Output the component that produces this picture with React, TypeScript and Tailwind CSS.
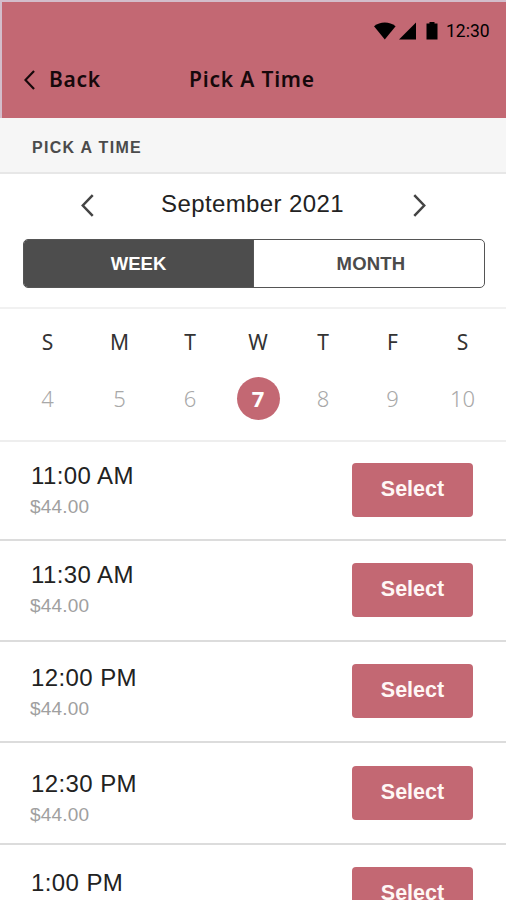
const days = [
  { label: "S", date: 4, width: "w-[71px]" },
  { label: "M", date: 5, width: "w-[73px]" },
  { label: "T", date: 6, width: "w-[68px]" },
  { label: "W", date: 7, width: "w-[68px]", active: true },
  { label: "T", date: 8, width: "w-[62px]" },
  { label: "F", date: 9, width: "w-[77px]" },
  { label: "S", date: 10, width: "w-[63px]" },
];

const slots = [
  { time: "11:00 AM", price: "$44.00", row: "h-[99px]", text: "pt-[18px]", button: "mt-[21px]" },
  { time: "11:30 AM", price: "$44.00", row: "h-[101px]", text: "pt-[18px]", button: "mt-[22px]" },
  { time: "12:00 PM", price: "$44.00", row: "h-[101px]", text: "pt-5", button: "mt-[22px]" },
  { time: "12:30 PM", price: "$44.00", row: "h-[102px]", text: "pt-[25px]", button: "mt-[23px]" },
  { time: "1:00 PM", row: "h-[101px]", text: "pt-[22px]", button: "mt-[22px]" },
];

function Chevron({ right, className }: { right?: boolean; className: string }) {
  return (
    <svg className={className} viewBox="0 0 12 22" fill="none" stroke="currentColor" strokeWidth="2.4">
      <path d={right ? "M1 1L10.5 11L1 21" : "M11 1L1.5 11L11 21"} />
    </svg>
  );
}

function StatusBar() {
  return (
    <div className="flex h-[58px] items-center pl-[372px] text-black">
      <svg className="h-[18px] w-[22px]" viewBox="0 0 22 18" fill="currentColor">
        <path d="M0 4.2C3.2 1.7 6.8.5 10.8.5S18.400 1.700 21.600 4.200L10.800 17.500Z" />
      </svg>
      <svg className="ml-[3px] h-[18px] w-[17px]" viewBox="0 0 17 18" fill="currentColor">
        <path d="M17 .5V17.500H0Z" />
      </svg>
      <svg className="ml-[10px] h-[18px] w-[12px]" viewBox="0 0 12 18" fill="currentColor">
        <path d="M3.500 0H8.500V1.500H11.500V17.500H.5V1.500H3.500Z" />
      </svg>
      <span className="ml-[8px] font-['Roboto',sans-serif] text-[17.500px] leading-5">12:30</span>
    </div>
  );
}

export default function App() {
  return (
    <div className="h-[900px] w-[506px] overflow-hidden bg-white font-['Liberation_Sans',sans-serif] text-[#222]">
      <header className="h-[118px] border-l-2 border-t-2 border-[#d3bdcb] bg-[#c36873]">
        <StatusBar />
        <div className="flex h-[38px] items-center pl-[22px] font-['Noto_Sans',sans-serif] text-[21px] font-semibold leading-7 text-[#16090b]">
          <Chevron className="mt-px h-[20px] w-[11px]" />
          <span className="ml-[14px] w-[140px] tracking-[0.700px]">Back</span>
          <span className="whitespace-nowrap tracking-[0.800px]">Pick A Time</span>
        </div>
      </header>

      <div className="flex h-14 items-center border-b-2 border-[#e7e7e7] bg-[#f6f6f6] pl-8 pt-[5px] text-[16px] font-bold tracking-[1.300px] text-[#4b4b4b]">
        PICK A TIME
      </div>

      <section className="h-[135px] border-b-2 border-[#f1f1f1] px-[23px] pt-4">
        <div className="flex h-7 items-center">
          <Chevron className="ml-[58px] mt-[2px] h-[23px] w-[13px] text-[#444]" />
          <h1 className="ml-[67px] w-[252px] whitespace-nowrap text-[24px] leading-7 tracking-[0.400px]">September 2021</h1>
          <Chevron right className="mt-[2px] h-[23px] w-[13px] text-[#444]" />
        </div>
        <div className="mt-[21px] flex h-[49px] w-[462px] overflow-hidden rounded-[5px] border border-[#555] text-[18.500px] font-bold">
          <button className="w-[229px] bg-[#4d4d4d] text-white">WEEK</button>
          <button className="flex-1 border-l border-[#555] pl-1 tracking-[0.200px] text-[#4b4b4b]">MONTH</button>
        </div>
      </section>

      <section className="flex h-[133px] border-b-2 border-[#eee] pl-3 pt-[19px] text-center font-['Noto_Sans',sans-serif]">
        {days.map((day) => (
          <div key={day.date} className={`flex flex-col items-center ${day.width}`}>
            <span className="text-[21px] leading-7 text-[#333]">{day.label}</span>
            {day.active ? (
              <span className="mt-[21px] flex size-[43px] items-center justify-center rounded-full bg-[#c36873] text-[22px] font-bold leading-[43px] text-white">{day.date}</span>
            ) : (
              <span className="mt-[21px] text-[22px] font-light leading-[42px] text-[#a8a8a8]">{day.date}</span>
            )}
          </div>
        ))}
      </section>

      <main>
        {slots.map((slot) => (
          <div key={slot.time} className={`flex items-start justify-between border-b-2 border-[#dcdcdc] pl-[30px] pr-[33px] ${slot.row}`}>
            <div className={slot.text}>
              <p className="pl-px text-[24px] leading-[31px] tracking-[0.400px]">{slot.time}</p>
              {slot.price && <p className="text-[19px] leading-8 tracking-[0.200px] text-[#a0a0a0]">{slot.price}</p>}
            </div>
            <button className={`h-[54px] w-[121px] rounded-[4px] bg-[#c36873] pb-[2px] text-[21.500px] font-bold text-[#fff7f5] ${slot.button}`}>
              Select
            </button>
          </div>
        ))}
      </main>
    </div>
  );
}
